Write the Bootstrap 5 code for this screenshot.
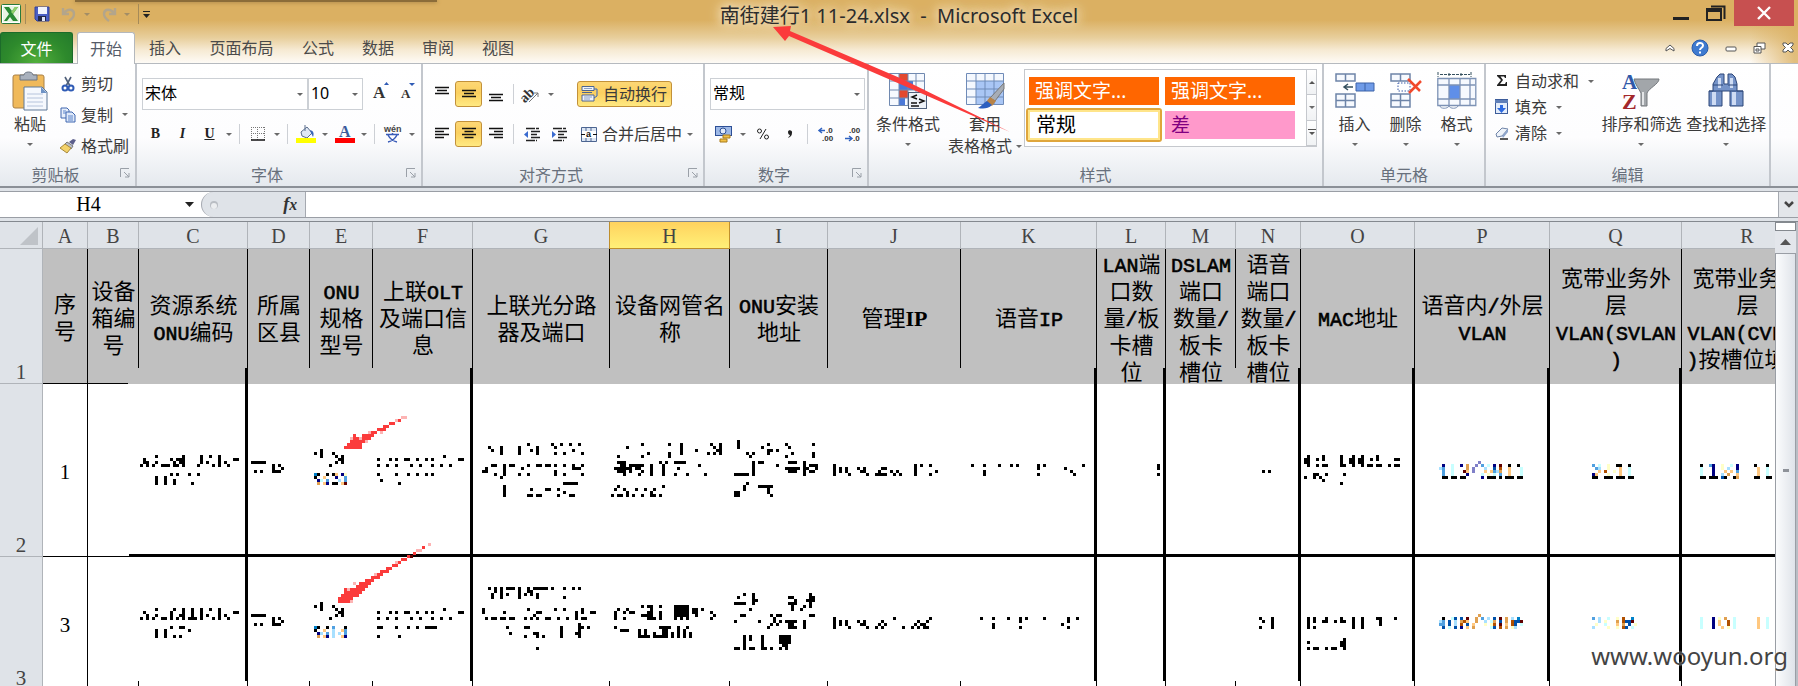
<!DOCTYPE html>
<html lang="zh-CN">
<head>
<meta charset="utf-8">
<meta name="viewport" content="width=device-width, initial-scale=1">
<title>南街建行1 11-24.xlsx - Microsoft Excel</title>
<link rel="stylesheet" href="https://cdn.jsdelivr.net/npm/bootstrap@5.3.0/dist/css/bootstrap.min.css">
<style>
body{font:16px/20px "Noto Sans","Noto Sans CJK SC",sans-serif;color:#3b3b3b;background:#dfe3e8}
button{font:inherit;color:inherit;border:0;background:none;padding:0}
svg{display:block;flex:none;overflow:visible}
/* window frame */
.frame-top{background:linear-gradient(90deg,transparent calc(100% - 48px),#dbb062cc calc(100% - 4px)),linear-gradient(#dbb062 0,#dbb062 20px,#e8cf9d 38px,#f6ead3 50px,#fefbf6 63px);height:63px}
.frame-top::before{content:"";position:absolute;left:75px;top:0;width:362px;height:2px;background:#8b6c39;box-shadow:0 0 4px #8b6c39}
.title-row{height:32px}
.title-text{font-size:20px;line-height:32px;color:#2c2c2c;text-shadow:0 0 8px #f4e4c4,0 0 12px #f4e4c4,0 0 16px #f4e4c4}
.quick{padding-left:1px;gap:0}
.vbar{width:1px;height:20px;background:#a58a58}
.win-close{width:60px;height:26px;background:#c75050}
.tab-row{height:31px}
.tab-btn{width:60px;height:31px;line-height:33px;text-decoration:none;color:#4a4a4a;text-align:center}
.tab-wide{width:93px}
.tab-file{width:73px;margin-right:4px;border-radius:3px 3px 0 0;border:1px solid #1c6b2a;border-bottom:0;color:#fff;background:radial-gradient(ellipse at 50% 100%,#53b03c 0,#2e8a2c 60%,#237a2c)}
.tab-on{width:58px;background:#fff;border:1px solid #b4b8bd;border-bottom:0;border-radius:3px 3px 0 0;height:32px;margin-bottom:-1px;color:#555b68}
/* ribbon */
.ribbon{height:125px;border-top:1px solid #b6babf;border-bottom:2px solid #8b9097;background:linear-gradient(#fff 0,#fdfdfe 60%,#e5e9ee 100%)}
.rgroup{border-right:2px solid #c3c7cd;height:122px}
.rbody{height:100px}
.rlabel{height:22px;line-height:22px;color:#68707c;text-align:center;position:relative}
.launch{position:absolute;right:5px;top:4px}
.w1{width:137px}.w2{width:286px}.w3{width:282px}.w4{width:164px}.w5{width:455px}.w6{width:162px}.w7{width:285px}
.inset{padding-left:5px}
.caret{display:inline-block;border:3px solid transparent;border-top-color:#6a6a6a;border-bottom:0;width:6px;height:3px;flex:none}
.big{display:flex;flex-direction:column;align-items:center;line-height:22px;white-space:nowrap}
.big .caret{margin-top:8px}
.pic{height:45px;display:flex;align-items:center}
.bw51{width:51px}.bw68{width:68px}.bw78{width:78px}.bw84{width:84px}.bw86{width:86px}
.stack{width:102px}
.mini{display:flex;align-items:center;gap:5px;white-space:nowrap}
.t26{height:26px}.t31{height:31px}
.tool{display:flex;align-items:center;justify-content:center;height:26px;width:27px;flex:none}
.drop{display:flex;align-items:center;justify-content:center;width:12px;height:26px;flex:none}
.sep{width:1px;height:20px;background:#cdd0d5;margin:0 4px;flex:none}
.on{border:1px solid #c2913a;border-radius:3px;background:linear-gradient(#fdd775,#fbd060 45%,#ffe981)}
.row-a{height:32px;margin-top:14px}
.row-b{height:26px;margin-top:11px}
.box{appearance:none;height:32px;border:1px solid #ccd0d5;border-radius:0;background:#fff url("data:image/svg+xml,%3Csvg xmlns='http://www.w3.org/2000/svg' width='6' height='3'%3E%3Cpath d='M0 0h6L3 3z' fill='%23666'/%3E%3C/svg%3E") no-repeat right 4px center;padding:0 0 2px 2px;font:inherit;line-height:26px;color:#000}
.box-font{width:169px}.box-size{width:56px}.box-num{width:155px}
.wrapcol{width:130px}
.serif-b{font:bold 14px/26px "Liberation Serif",serif;color:#222}
.gallery{width:293px;height:78px;border:1px solid #c5c8cd;background:#fff;margin-top:5px}
.swatches{gap:6px;align-content:flex-start;padding:7px 0 0 4px}
.swatch{width:130px;height:28px;text-align:left;padding-left:6px;line-height:26px;font-size:19px;color:#fff;background:#f60}
.swatch-pink{background:#ff99cb;color:#800080}
.swatch-pick{width:136px;height:34px;border:2px solid #dfa63c;outline:2px solid #ffe58a;outline-offset:-4px;border-radius:3px;background:#fff;color:#000;padding-left:8px;font-size:20px;margin:-3px}
.gscroll{width:18px;border-left:1px solid #c5c8cd}
.gscroll button{flex:1;border-bottom:1px solid #c5c8cd;display:flex;align-items:center;justify-content:center;background:linear-gradient(#fff,#f0f2f4)}
/* formula bar */
.fbar{height:27px;margin-top:3px;border-top:1px solid #9a9ea5;border-bottom:1px solid #9a9ea5;background:#fff}
.namebox{width:201px;background:#fff}
.namebox input{width:177px;border:0;text-align:center;font:20px/25px "Liberation Serif",serif;color:#000;background:none;outline:0}
.pill{width:105px;background:#dfe3e8;border:1px solid #a5a9b0;border-width:0 1px;border-radius:13px 0 0 13px}
.fx{font:italic bold 18px/24px "Liberation Serif",serif;color:#333}
.finput{border:0;outline:0;background:#fff}
.fexpand{width:20px;background:#e3e6ea;border-left:1px solid #a5a9b0;display:flex;align-items:center;justify-content:center}
.gridwrap{margin-top:3px;border-top:1px solid #84898f;min-height:0}
/* sheet */
.sheet{table-layout:fixed;width:1813px;border-collapse:separate;border-spacing:0;background:#fff;color:#000}
.sheet th,.sheet td{padding:0}
.sheet .colhead th{height:27px;background:#dfe3e8;border-right:1px solid #b0b4b9;border-bottom:1px solid #b0b4b9;font:20px/24px "Liberation Serif",serif;color:#444;text-align:center;padding-top:2px}
.sheet .colhead .cur{background:linear-gradient(#ffd25e,#fff078);border-color:#bf8f2c;box-shadow:-1px 0 #bf8f2c}
.rowhead{background:#dfe3e8;border-right:1px solid #b0b4b9;border-bottom:1px solid #b0b4b9;font:21px/22px "Liberation Serif",serif;color:#444;text-align:center;vertical-align:bottom}
.r1 td{height:135px;background:#c0c0c0;--thin:linear-gradient(#000,#000) right top/1px 119px no-repeat;--fat:linear-gradient(#000,#000) right bottom/3px 16px no-repeat}
.r1 .cap{height:134px;display:flex;align-items:center;justify-content:center;overflow:hidden;text-align:center;font-size:22px;line-height:27px;font-weight:400;white-space:nowrap;padding-top:2px}
.cap i{font:20px/20px "Liberation Mono",monospace;-webkit-text-stroke:.6px #000}
.cap b{font-family:"Liberation Serif",serif}
.r1 .n{background:var(--thin),#c0c0c0}
.r1 .f{background:var(--thin),var(--fat),#c0c0c0}
.r1 .a{border-right:1px solid #000;border-bottom:1px solid #000}
.r1 .b{background:linear-gradient(#000,#000) right top/1px 119px no-repeat,linear-gradient(#000,#000) left bottom/40px 1px no-repeat,#c0c0c0}
.r2 td{height:173px;border-bottom:3px solid #000;vertical-align:top}
.r2 .f{border-right:3px solid #000}
.sheet .r2 .a,.sheet .r3 .a{border-right:1px solid #000;border-bottom:1px solid #000;text-align:center;vertical-align:middle;font:21px/24px "Liberation Serif",serif;padding-top:4px;background:none}
.r2 .b{border-bottom:0;background:linear-gradient(#000,#000) left bottom/100% 1px no-repeat,linear-gradient(#000,#000) right bottom/10px 3px no-repeat}
.r3 td{height:133px;vertical-align:top}
.r3 .n,.r3 .b{background:linear-gradient(#000,#000) right bottom/1px 9px no-repeat}
.r3 .f{background:linear-gradient(#000,#000) right bottom/1px 9px no-repeat,linear-gradient(#000,#000) right top/3px 124px no-repeat}
.mosaic{width:100%;height:130px;shape-rendering:crispEdges}
.corner{position:relative}
.corner::after{content:"";position:absolute;right:4px;bottom:3px;border:9px solid transparent;border-right-color:#bfc3c8;border-bottom-color:#bfc3c8}
.vscroll{width:23px;background:#e3e6eb;border-right:2px solid #b9bdc4}
.vsplit{height:9px;border:1px solid #84898f;background:#fff}
.varrow{height:22px}
.vthumb{border:1px solid #9a9ea5;border-bottom:0;background:linear-gradient(90deg,#fbfcfd,#dfe3e9)}
.grip{width:6px;height:3px;background:#8e9299}
.over{position:absolute;left:0;top:0;pointer-events:none}
.stamp{position:absolute;right:10px;bottom:14px;font-size:24px;line-height:32px;color:#444;text-shadow:0 0 2px #fff}
</style>
</head>
<body class="vh-100 overflow-hidden position-relative d-flex flex-column">

<header class="frame-top position-relative flex-shrink-0">
  <div class="title-row d-flex align-items-start position-relative">
    <div class="quick d-flex align-items-center pt-1">
      <svg width="20" height="20" viewBox="0 0 20 20"><rect x=".5" y=".5" width="19" height="19" rx="1" fill="#fff" stroke="#2a7a3b"/><rect x="2" y="2" width="16" height="16" fill="#e9f4e4"/><path d="M3 3h5l3 4 3-4h3l-5 7 5 7h-5l-3-4-3 4H3l5-7z" fill="#2b8a34"/><path d="M14 3h3l-5 7-2-2z" fill="#8fd06a"/></svg>
      <span class="vbar ms-1 me-2"></span>
      <button aria-label="保存"><svg width="16" height="16" viewBox="0 0 16 16"><path d="M1 1h14v14H3l-2-2z" fill="#4a5fc4" stroke="#33439a"/><rect x="4" y="1" width="9" height="7" fill="#f1f4fc"/><rect x="4" y="10" width="8" height="5" fill="#23294a"/><rect x="8" y="11" width="3" height="4" fill="#dfe4f5"/></svg></button>
      <button class="ms-2 ps-1" aria-label="撤消"><svg width="14" height="15" viewBox="0 0 14 15"><path d="M1 1v6h6M2 6c4-5 10-4 10 1 0 3-2 5-5 7" fill="none" stroke="#b3a58b" stroke-width="2.4"/></svg></button>
      <span class="caret ms-2 opacity-50"></span>
      <button class="ms-2 ps-1" aria-label="恢复"><svg width="14" height="15" viewBox="0 0 14 15"><path d="M13 1v6H7M12 6C8 1 2 2 2 7c0 3 2 5 5 7" fill="none" stroke="#b3a58b" stroke-width="2.4"/></svg></button>
      <span class="caret ms-2 opacity-50"></span>
      <span class="vbar ms-2 me-1"></span>
      <button aria-label="自定义快速访问工具栏"><svg width="7" height="8" viewBox="0 0 7 8"><path d="M0 1h7v1H0zM0 4h7L3.500 8z" fill="#222"/></svg></button>
    </div>
    <div class="title-text position-absolute start-50 translate-middle-x text-nowrap">南街建行1 11-24.xlsx&nbsp; -&nbsp; Microsoft Excel</div>
    <div class="ms-auto d-flex">
      <button aria-label="最小化" class="me-3"><svg width="18" height="26" viewBox="0 0 18 26"><path d="M1 17h16v3H1z" fill="#222"/></svg></button>
      <button aria-label="向下还原" class="me-2"><svg width="20" height="26" viewBox="0 0 20 26"><path d="M5 6.500h13.500V19" fill="none" stroke="#222" stroke-width="2"/><path d="M1 9h14v11H1z" fill="none" stroke="#222" stroke-width="2"/><path d="M1 8h14v4H1z" fill="#222"/></svg></button>
      <button aria-label="关闭" class="win-close d-flex align-items-center justify-content-center"><svg width="16" height="14" viewBox="0 0 16 14"><path d="M2 1l12 12M14 1L2 13" stroke="#fff" stroke-width="2.400"/></svg></button>
      <span class="pe-1"></span>
    </div>
  </div>
  <nav class="tab-row d-flex align-items-start">
    <a href="#" class="tab-btn tab-file">文件</a>
    <a href="#" class="tab-btn tab-on">开始</a>
    <a href="#" class="tab-btn">插入</a>
    <a href="#" class="tab-btn tab-wide">页面布局</a>
    <a href="#" class="tab-btn">公式</a>
    <a href="#" class="tab-btn">数据</a>
    <a href="#" class="tab-btn">审阅</a>
    <a href="#" class="tab-btn">视图</a>
    <div class="ms-auto d-flex align-items-center h-100 gap-3 pe-1">
      <button aria-label="功能区最小化"><svg width="10" height="10" viewBox="0 0 10 10"><path d="M1 5.500L5 2l4 3.500V8L5 5.500 1 8z" fill="#fff" stroke="#555"/></svg></button>
      <button aria-label="帮助"><svg width="18" height="18" viewBox="0 0 18 18"><circle cx="9" cy="9" r="8" fill="#3f7bd0" stroke="#2a5ba8"/><path d="M6 7c0-4 6-4 6-.5C12 9 9 8.500 9 11M9 12.500v2" fill="none" stroke="#fff" stroke-width="2"/></svg></button>
      <button aria-label="最小化窗口"><svg width="12" height="12" viewBox="0 0 12 12"><rect x="1" y="5" width="10" height="4" rx="1" fill="#fff" stroke="#555"/></svg></button>
      <button aria-label="还原窗口"><svg width="13" height="12" viewBox="0 0 13 12"><path d="M4 1h8v6H4z" fill="#fff" stroke="#555"/><path d="M1 4.500h7V11H1z" fill="#fff" stroke="#555"/><path d="M3 7h3v2H3z" fill="none" stroke="#555"/></svg></button>
      <button aria-label="关闭窗口"><svg width="12" height="12" viewBox="0 0 12 12"><path d="M1 1h3l2 2 2-2h3v2L8.500 5.500 11 8v2H8L6 8l-2 2H1V8l2.500-2.500L1 3z" fill="#fff" stroke="#555"/></svg></button>
    </div>
  </nav>
</header>

<section class="ribbon d-flex flex-shrink-0">
  <div class="rgroup w1">
    <div class="rbody d-flex pt-1">
      <button class="big ms-2 ps-1"><span class="pic"><svg width="36" height="40" viewBox="0 0 36 40"><rect x="1" y="4" width="31" height="33" rx="2" fill="#f0b95a" stroke="#a98046"/><path d="M8 4h4c0-4 9-4 9 0h4v5H8z" fill="#a9b1bd" stroke="#6b7482"/><path d="M12 16h18l5 5v18H12z" fill="#f5f8fd" stroke="#5f7897"/><path d="M29 16v6h6z" fill="#6f93c6"/><path d="M15 23h16M15 27h16M15 31h16M15 35h16" stroke="#b6c4dc"/></svg></span>粘贴<span class="caret"></span></button>
      <div class="ms-2 ps-1">
        <button class="mini t31"><svg width="16" height="16" viewBox="0 0 16 16"><path d="M5 1l5 9M11 1L6 10" stroke="#50607a" stroke-width="1.600"/><circle cx="5" cy="12" r="2.500" fill="none" stroke="#2f5bb5" stroke-width="2"/><circle cx="11" cy="12" r="2.500" fill="none" stroke="#2f5bb5" stroke-width="2"/></svg>剪切</button>
        <button class="mini t31"><svg width="16" height="16" viewBox="0 0 16 16"><path d="M1 1h6l2 2v8H1z" fill="#e8effa" stroke="#3f66b0"/><path d="M6 5h6l3 3v7H6z" fill="#dfe9f9" stroke="#3f66b0"/><path d="M8 9h5M8 11h5M8 13h5M3 4h3M3 6h3" stroke="#5f86cb"/></svg>复制<span class="caret ms-1"></span></button>
        <button class="mini t31"><svg width="16" height="16" viewBox="0 0 16 16"><path d="M9 4l4-3 3 1-3 5z" fill="#5c5f8c"/><path d="M7 4l6 4-2 3-7-4z" fill="#b9bfcb" stroke="#777"/><path d="M5 6l6 4-4 5-7-5z" fill="#f3d26a" stroke="#a8893a"/></svg>格式刷</button>
      </div>
    </div>
    <div class="rlabel pe-4">剪贴板<svg class="launch" width="10" height="10" viewBox="0 0 10 10"><path d="M.5 9V.5H9M4 4l5 5M9 5v4H5" fill="none" stroke="#9aa0a8"/></svg></div>
  </div>

  <div class="rgroup w2">
    <div class="rbody d-flex flex-column inset">
      <div class="row-a d-flex">
        <select class="box box-font" aria-label="字体"><option>宋体</option></select>
        <select class="box box-size" aria-label="字号"><option>10</option></select>
        <button class="tool ms-1" aria-label="增大字号"><svg width="16" height="18" viewBox="0 0 16 18"><text x="0" y="16" font-family="Liberation Serif" font-weight="bold" font-size="17" fill="#333">A</text><path d="M11 3l2.500-3L16 3z" fill="#2f5bb5"/></svg></button>
        <button class="tool" aria-label="减小字号"><svg width="14" height="18" viewBox="0 0 14 18"><text x="0" y="16" font-family="Liberation Serif" font-weight="bold" font-size="13" fill="#333">A</text><path d="M8 1h6l-3 3z" fill="#2f5bb5"/></svg></button>
      </div>
      <div class="row-b d-flex align-items-center">
        <button class="tool serif-b">B</button><button class="tool serif-b fst-italic">I</button><button class="tool serif-b text-decoration-underline">U</button><span class="drop"><span class="caret"></span></span><span class="sep"></span>
        <button class="tool" aria-label="边框"><svg width="14" height="14" viewBox="0 0 14 14"><path d="M.5 0v13M6.500 0v13M13.500 0v13M0 .5h14M0 6.500h14" stroke="#777" stroke-dasharray="1 1"/><path d="M0 13h14" stroke="#111" stroke-width="1.500"/></svg></button><span class="drop"><span class="caret"></span></span><span class="sep"></span>
        <button class="tool" aria-label="填充颜色"><svg width="20" height="20" viewBox="0 0 20 20"><path d="M5 8l6-5 5 6-5 5-5-2z" fill="#dfe8f5" stroke="#5a6d8c"/><path d="M9 1v6" stroke="#5a6d8c"/><path d="M14 6c4 1 4 4 3 7l-2-4z" fill="#3a66b8"/><rect x="0" y="14" width="20" height="5" fill="#ff0"/></svg></button><span class="drop"><span class="caret"></span></span>
        <button class="tool" aria-label="字体颜色"><svg width="20" height="20" viewBox="0 0 20 20"><text x="4" y="13" font-family="Liberation Serif" font-weight="bold" font-size="16" fill="#3b5c9c">A</text><rect y="14" width="20" height="5" fill="red"/></svg></button><span class="drop"><span class="caret"></span></span><span class="sep"></span>
        <button class="tool" aria-label="拼音"><svg width="18" height="18" viewBox="0 0 18 18"><text x="0" y="7" font-family="Liberation Sans" font-weight="bold" font-size="9" fill="#444">wén</text><path d="M2 9.500h13M8.500 8v2M4 10c2 4 5 6 9 7M13 10c-2 4-5 6-9 7" fill="none" stroke="#3a5cb8" stroke-width="1.500"/></svg></button><span class="drop"><span class="caret"></span></span>
      </div>
    </div>
    <div class="rlabel pe-4">字体<svg class="launch" width="10" height="10" viewBox="0 0 10 10"><path d="M.5 9V.5H9M4 4l5 5M9 5v4H5" fill="none" stroke="#9aa0a8"/></svg></div>
  </div>

  <div class="rgroup w3">
    <div class="rbody d-flex inset">
      <div>
        <div class="row-a d-flex align-items-center">
          <button class="tool" aria-label="顶端对齐"><svg width="14" height="18" viewBox="0 0 14 18"><path d="M0 2.500h14M2 5.500h10M0 8.500h14" stroke="#111" stroke-width="1.500"/></svg></button><button class="tool on" aria-label="垂直居中"><svg width="14" height="10" viewBox="0 0 14 10"><path d="M0 1.500h14M2 4.500h10M0 7.500h14" stroke="#111" stroke-width="1.500"/></svg></button><button class="tool" aria-label="底端对齐"><svg width="14" height="18" viewBox="0 0 14 18"><path d="M0 9.500h14M2 12.500h10M0 15.500h14" stroke="#111" stroke-width="1.500"/></svg></button><span class="sep"></span>
          <button class="tool" aria-label="方向"><svg width="17" height="17" viewBox="0 0 17 17"><text x="-3" y="12" font-family="Liberation Serif" font-weight="bold" font-size="14" fill="#333" transform="rotate(-45 6 9)">ab</text><path d="M6 16l9-9M11 7h4v4" fill="none" stroke="#777"/></svg></button><span class="drop"><span class="caret"></span></span>
        </div>
        <div class="row-b d-flex align-items-center">
          <button class="tool" aria-label="左对齐"><svg width="14" height="14" viewBox="0 0 14 14"><path d="M0 1.500h14M0 4.500h9M0 7.500h14M0 10.500h9" stroke="#111" stroke-width="1.500"/></svg></button><button class="tool on" aria-label="居中"><svg width="14" height="14" viewBox="0 0 14 14"><path d="M0 1.500h14M2.500 4.500h9M0 7.500h14M2.500 10.500h9" stroke="#111" stroke-width="1.500"/></svg></button><button class="tool" aria-label="右对齐"><svg width="14" height="14" viewBox="0 0 14 14"><path d="M0 1.500h14M5 4.500h9M0 7.500h14M5 10.500h9" stroke="#111" stroke-width="1.500"/></svg></button><span class="sep"></span>
          <button class="tool" aria-label="减少缩进"><svg width="16" height="15" viewBox="0 0 16 15"><path d="M2 1.500h13M7 4.500h9M7 7.500h6M7 10.500h9M2 13.500h11" stroke="#222" stroke-width="1.500" stroke-dasharray="9 1"/><path d="M4 4L0 7.500 4 11z" fill="#3a6bd0"/></svg></button><button class="tool" aria-label="增加缩进"><svg width="16" height="15" viewBox="0 0 16 15"><path d="M2 1.500h13M7 4.500h9M7 7.500h6M7 10.500h9M2 13.500h11" stroke="#222" stroke-width="1.500" stroke-dasharray="9 1"/><path d="M1 4l4 3.500L1 11z" fill="#3a6bd0"/></svg></button>
        </div>
      </div>
      <div class="ms-auto wrapcol">
        <div class="row-a d-flex align-items-center ps-1"><button class="mini on t26 px-1"><svg width="16" height="16" viewBox="0 0 16 16"><path d="M0 .5h12v4H0zM0 6.500h10M0 9h12v6H0z" fill="#eef3fb" stroke="#4c6591"/><path d="M2 2.500h8M2 11h8M2 13h6" stroke="#8aa0c4"/><path d="M12 3h3v7l-3 2" fill="none" stroke="#3465c0"/></svg>自动换行</button></div>
        <div class="row-b d-flex align-items-center ps-2"><button class="mini"><svg width="16" height="15" viewBox="0 0 16 15"><path d="M.5.5h15v14H.5zM5 0v4M10 0v4M5 11v4M10 11v4" fill="#dce6f4" stroke="#4c6591"/><rect x="1" y="4" width="14" height="7" fill="#fff"/><text x="5" y="10" font-family="Liberation Sans" font-weight="bold" font-size="9" fill="#111">a</text><path d="M0 7.500h4M16 7.500h-4" stroke="#111"/></svg>合并后居中<span class="caret"></span></button></div>
      </div>
    </div>
    <div class="rlabel pe-4">对齐方式<svg class="launch" width="10" height="10" viewBox="0 0 10 10"><path d="M.5 9V.5H9M4 4l5 5M9 5v4H5" fill="none" stroke="#9aa0a8"/></svg></div>
  </div>

  <div class="rgroup w4">
    <div class="rbody d-flex flex-column inset">
      <div class="row-a d-flex"><select class="box box-num" aria-label="数字格式"><option>常规</option></select></div>
      <div class="row-b d-flex align-items-center">
        <button class="tool" aria-label="会计数字格式"><svg width="18" height="17" viewBox="0 0 18 17"><rect x=".5" y=".5" width="16" height="9" fill="#9db8e6" stroke="#2d4f96"/><circle cx="8" cy="5" r="3" fill="#dfe9f9" stroke="#2d4f96"/><path d="M8 9h7v3H8zM5 13h7v3H5z" fill="#f2c146" stroke="#a87a1b"/></svg></button><span class="drop"><span class="caret"></span></span>
        <button class="tool" aria-label="百分比"><svg width="12" height="12" viewBox="0 0 12 12"><circle cx="2.500" cy="3" r="2" fill="none" stroke="#222"/><circle cx="9.500" cy="9" r="2" fill="none" stroke="#222"/><path d="M9 1L3 11" stroke="#222"/></svg></button>
        <button class="tool" aria-label="千位分隔"><svg width="6" height="9" viewBox="0 0 6 9"><path d="M1 2c0-3 5-2 4 1 0 3-2 4-4 5 1-2 2-2 2-3C2 5 1 4 1 2z" fill="#222"/></svg></button><span class="sep"></span>
        <button class="tool" aria-label="增加小数位数"><svg width="16" height="15" viewBox="0 0 16 15"><text x="8" y="6" font-family="Liberation Sans" font-weight="bold" font-size="8" fill="#333">.0</text><text x="4" y="14" font-family="Liberation Sans" font-weight="bold" font-size="8" fill="#333">.00</text><path d="M7 3.500H1M4 1L1 3.500 4 6" fill="none" stroke="#2f62c0" stroke-width="1.500"/></svg></button><button class="tool" aria-label="减少小数位数"><svg width="16" height="15" viewBox="0 0 16 15"><text x="4" y="6" font-family="Liberation Sans" font-weight="bold" font-size="8" fill="#333">.00</text><text x="8" y="14" font-family="Liberation Sans" font-weight="bold" font-size="8" fill="#333">.0</text><path d="M0 11.500h6M4 9l3 2.500L4 14" fill="none" stroke="#2f62c0" stroke-width="1.500"/></svg></button>
      </div>
    </div>
    <div class="rlabel pe-4">数字<svg class="launch" width="10" height="10" viewBox="0 0 10 10"><path d="M.5 9V.5H9M4 4l5 5M9 5v4H5" fill="none" stroke="#9aa0a8"/></svg></div>
  </div>

  <div class="rgroup w5">
    <div class="rbody d-flex inset">
      <button class="big bw68 mt-1"><span class="pic"><svg width="38" height="36" viewBox="0 0 38 36"><path d="M.5.500h35v32H.5z" fill="#f6f9fe"/><path d="M10 0h9v8h-9zM10 17h9v8h-9z" fill="#e2492f"/><path d="M10 8h14v9H10zM10 25h6v7h-6z" fill="#4a78d8"/><path d="M.5.500h35v32H.5zM10 0v32M19 0v32M27 0v32M0 8h36M0 17h36M0 25h36" fill="none" stroke="#7089b0"/><rect x="19.500" y="19.500" width="18" height="16" fill="#eef2f8" stroke="#50617c"/><path d="M28 22l-5 2 5 2M30 26l5 2-5 2M22 30h6M22 33h8" fill="none" stroke="#111" stroke-width="1.400"/></svg></span>条件格式<span class="caret"></span></button>
      <button class="big bw78 mt-1 ms-1"><span class="pic"><svg width="39" height="36" viewBox="0 0 39 36"><path d="M.5.500h37v31H.5z" fill="#f4f8fe"/><path d="M10 8h27v23H10z" fill="#a9c6f5"/><path d="M.5.500h37v31H.5zM10 0v31M19 0v31M28 0v31M0 8h37M0 16h37M0 24h37" fill="none" stroke="#6f8bb8"/><path d="M38 10v6L29 28l-5-3z" fill="#a7adb6" stroke="#777"/><path d="M24 24l6 4-4 5-6-4z" fill="#b88347"/><path d="M21 28l5 4c-4 4-9 4-14 3 4-2 5-5 9-7z" fill="#2c5fc0"/></svg></span>套用<span class="d-flex align-items-center">表格格式<span class="caret mt-0 ms-1"></span></span></button>
      <div class="gallery d-flex">
        <div class="flex-fill d-flex flex-wrap swatches">
          <button class="swatch">强调文字...</button><button class="swatch">强调文字...</button>
          <button class="swatch swatch-pick">常规</button><button class="swatch swatch-pink">差</button>
        </div>
        <div class="gscroll d-flex flex-column">
          <button aria-label="上一行"><svg width="6" height="3" viewBox="0 0 6 3"><path d="M0 3h6L3 0z" fill="#555"/></svg></button><button aria-label="下一行"><span class="caret"></span></button><button aria-label="其他"><svg width="8" height="7" viewBox="0 0 8 7"><path d="M0 0h8v1H0zM1 3h6L4 6z" fill="#555"/></svg></button>
        </div>
      </div>
    </div>
    <div class="rlabel">样式</div>
  </div>

  <div class="rgroup w6">
    <div class="rbody d-flex pt-1 inset">
      <button class="big bw51"><span class="pic"><svg width="40" height="35" viewBox="0 0 40 35"><path d="M1 1h19v7H1zM10.500 1v7M1 21h19v13H1zM10.500 21v13M1 27.500h19" fill="#f6f9fe" stroke="#6d84a8" stroke-width="1.500"/><path d="M21 10h18v8H21zM30 10v8" fill="#6f9be8" stroke="#3c62a8"/><path d="M9 14h9M13 11l-4 3 4 3" fill="none" stroke="#35505f" stroke-width="1.500"/></svg></span>插入<span class="caret"></span></button>
      <button class="big bw51"><span class="pic"><svg width="32" height="35" viewBox="0 0 32 35"><path d="M1 1h19v7H1zM10.500 1v7M1 21h19v13H1zM10.500 21v13M1 27.500h19" fill="#f6f9fe" stroke="#6d84a8" stroke-width="1.500"/><path d="M8 10h12v8H8z" fill="none" stroke="#3c5ca8" stroke-dasharray="1.500 1.500"/><path d="M18 6l12 12M31 8L19 20" stroke="#f1492c" stroke-width="2.500"/></svg></span>删除<span class="caret"></span></button>
      <button class="big bw51"><span class="pic"><svg width="40" height="38" viewBox="0 0 40 38"><path d="M1 0v5M34 0v5M3 2.500h30M12 1v3M24 1v3" stroke="#35505f" stroke-dasharray="3 1"/><path d="M.8 6.500h38v27H.8z" fill="#f6f9fe"/><path d="M12 13h11v14H12z" fill="#5f8fe8"/><path d="M.8 6.500h38v27H.8zM12 6v27M23 6v27M33 6v27M0 13h38M0 27h38" fill="none" stroke="#7d92b5" stroke-width="1.300"/><path d="M3 34c0 3 8 3 9 0M12 34c1 3 8 3 9 0" fill="none" stroke="#7d92b5"/></svg></span>格式<span class="caret"></span></button>
    </div>
    <div class="rlabel">单元格</div>
  </div>

  <div class="rgroup w7">
    <div class="rbody d-flex">
      <div class="ms-2 d-flex flex-column stack pt-1">
        <button class="mini t26"><svg width="16" height="14" viewBox="0 0 16 14"><path d="M3 1h9v3h-1l-1-1.500H6.500L9 6l-3 4h5l1-2h1v4H3v-1l4-5-4-4z" fill="#222"/></svg>自动求和<span class="caret ms-1"></span></button>
        <button class="mini t26"><svg width="16" height="16" viewBox="0 0 16 16"><rect x="1.500" y=".500" width="12" height="14" fill="#e4edfa" stroke="#3c5c9a"/><path d="M1 1h13v3H1z" fill="#5f7fb8"/><path d="M6 6h3v3h3l-4.500 5L3 9h3z" fill="#2d6ae0"/></svg>填充<span class="caret ms-1"></span></button>
        <button class="mini t26"><svg width="16" height="14" viewBox="0 0 16 14"><path d="M2 8l6-6 6 1-6 7-5 1z" fill="#eef3fa" stroke="#6f84a8"/><path d="M8 10l6-7v3l-5 6z" fill="#8ea5cc"/><path d="M6 13h8" stroke="#222" stroke-width="1.500"/></svg>清除<span class="caret ms-1"></span></button>
      </div>
      <button class="big bw84 ms-1 mt-1"><span class="pic"><svg width="38" height="38" viewBox="0 0 38 38"><text x="0" y="17" font-family="Liberation Serif" font-weight="bold" font-size="21" fill="#2f58a8">A</text><text x="0" y="37" font-family="Liberation Serif" font-weight="bold" font-size="22" fill="#a3282c">Z</text><path d="M12 7h25c0 5-10 9-12 14v13h-6V21C17 17 13 12 12 7z" fill="#a2a6aa" stroke="#74787d"/><path d="M20 20h2v13h-2z" fill="#e3e5e7"/></svg></span>排序和筛选<span class="caret"></span></button>
      <button class="big bw86 mt-1"><span class="pic"><svg width="36" height="34" viewBox="0 0 36 34"><path d="M9 3l3-3h4v10h4V0h4l3 3 2 7v7h6v15H22V17h-8v15H1V17h4v-7z" fill="#7593c8" stroke="#2d4678"/><path d="M4 18h4v13H4zM24 18h4v13h-4zM10 4h3v10h-3zM22 4h3v10h-3z" fill="#cfdcf3"/><path d="M1 17h13M22 17h13M5 11h10M20 11h9" stroke="#2d4678"/></svg></span>查找和选择<span class="caret"></span></button>
    </div>
    <div class="rlabel">编辑</div>
  </div>
</section>

<section class="fbar d-flex flex-shrink-0">
  <div class="namebox d-flex align-items-center"><input value="H4" aria-label="名称框"><svg class="ms-2" width="9" height="5" viewBox="0 0 9 5"><path d="M0 0h9L4.500 5z" fill="#222"/></svg></div>
  <div class="pill d-flex align-items-center justify-content-between ps-2 pe-2"><svg width="8" height="8" viewBox="0 0 8 8"><circle cx="4" cy="4" r="4" fill="#b9bdc3"/><circle cx="4" cy="5" r="3" fill="#eceef0"/></svg><button class="fx" aria-label="插入函数">f<small>x</small></button></div>
  <input class="finput flex-fill" aria-label="编辑栏">
  <button class="fexpand" aria-label="展开编辑栏"><svg width="10" height="7" viewBox="0 0 10 7"><path d="M1 1l4 4 4-4" fill="none" stroke="#444" stroke-width="2.500"/></svg></button>
</section>

<main class="gridwrap d-flex flex-fill">
  <div class="flex-fill overflow-hidden">
    <table class="sheet">
      <colgroup id="cols"></colgroup>
      <thead><tr class="colhead"><th class="corner"></th><th>A</th><th>B</th><th>C</th><th>D</th><th>E</th><th>F</th><th>G</th><th class="cur">H</th><th>I</th><th>J</th><th>K</th><th>L</th><th>M</th><th>N</th><th>O</th><th>P</th><th>Q</th><th>R</th></tr></thead>
      <tbody>
        <tr class="r1"><th class="rowhead">1</th>
          <td class="a"><div class="cap">序<br>号</div></td>
          <td class="b"><div class="cap">设备<br>箱编<br>号</div></td>
          <td class="f"><div class="cap"><span>资源系统<br><i>ONU</i>编码</span></div></td>
          <td class="n"><div class="cap">所属<br>区县</div></td>
          <td class="n"><div class="cap"><span><i>ONU</i><br>规格<br>型号</span></div></td>
          <td class="f"><div class="cap"><span>上联<i>OLT</i><br>及端口信<br>息</span></div></td>
          <td class="n"><div class="cap">上联光分路<br>器及端口</div></td>
          <td class="n"><div class="cap">设备网管名<br>称</div></td>
          <td class="n"><div class="cap"><span><i>ONU</i>安装<br>地址</span></div></td>
          <td class="n"><div class="cap"><span>管理<b>IP</b></span></div></td>
          <td class="f"><div class="cap"><span>语音<i>IP</i></span></div></td>
          <td class="f"><div class="cap"><span><i>LAN</i>端<br>口数<br>量<i>/</i>板<br>卡槽<br>位</span></div></td>
          <td class="n"><div class="cap"><span><i>DSLAM</i><br>端口<br>数量<i>/</i><br>板卡<br>槽位</span></div></td>
          <td class="f"><div class="cap"><span>语音<br>端口<br>数量<i>/</i><br>板卡<br>槽位</span></div></td>
          <td class="f"><div class="cap"><span><i>MAC</i>地址</span></div></td>
          <td class="f"><div class="cap"><span>语音内<i>/</i>外层<br><i>VLAN</i></span></div></td>
          <td class="f"><div class="cap"><span>宽带业务外<br>层<br><i>VLAN(SVLAN</i><br><i>)</i></span></div></td>
          <td><div class="cap"><span>宽带业务内<br>层<br><i>VLAN(CVLAN</i><br><i>)</i>按槽位填写</span></div></td></tr>
        <tr class="r2"><th class="rowhead">2</th><td class="a">1</td><td class="b"></td><td class="f" id="C2"></td><td id="D2"></td><td id="E2"></td><td class="f" id="F2"></td><td id="G2"></td><td id="H2"></td><td id="I2"></td><td id="J2"></td><td class="f" id="K2"></td><td class="f" id="L2"></td><td></td><td class="f" id="N2"></td><td class="f" id="O2"></td><td class="f" id="P2"></td><td class="f" id="Q2"></td><td id="R2"></td></tr>
        <tr class="r3"><th class="rowhead">3</th><td class="a">3</td><td class="b"></td><td class="f" id="C3"></td><td class="n" id="D3"></td><td class="n" id="E3"></td><td class="f" id="F3"></td><td class="n" id="G3"></td><td class="n" id="H3"></td><td class="n" id="I3"></td><td class="n" id="J3"></td><td class="f" id="K3"></td><td class="f"></td><td class="n"></td><td class="f" id="N3"></td><td class="f" id="O3"></td><td class="f" id="P3"></td><td class="f" id="Q3"></td><td class="n" id="R3"></td></tr>
      </tbody>
    </table>
  </div>
  <div class="vscroll d-flex flex-column flex-shrink-0">
    <div class="vsplit"></div>
    <button class="varrow d-flex align-items-center justify-content-center" aria-label="向上滚动"><svg width="11" height="6" viewBox="0 0 11 6"><path d="M0 6h11L5.500 0z" fill="#555"/></svg></button>
    <div class="vthumb flex-fill d-flex align-items-center justify-content-center"><span class="grip"></span></div>
  </div>
</main>

<svg class="over" width="1100" height="686" viewBox="0 0 1100 686" id="arrows"><path d="M773 27l18-1-1 5 110 47 110 54-110-48-111-48-4 5z" fill="#fb3b3b"/></svg>
<div class="stamp">www.wooyun.org</div>

<script src="https://cdn.jsdelivr.net/npm/bootstrap@5.3.0/dist/js/bootstrap.bundle.min.js"></script>
<script>
// column widths, row header first
const widths=[43,45,51,109,62,63,100,137,120,98,133,136,69,70,65,114,135,132,131];
document.getElementById('cols').innerHTML=widths.map(w=>`<col style="width:${w}px">`).join('');

// colour letters that may follow a column number; no letter is black
const ink={n:'#000080',b:'#0080c8',l:'#a8e0ff',t:'#ffc880',o:'#e0a050',y:'#ffffc8',r:'#600000',s:'#50a0e0',c:'#c8ffff',p:'#8080c8',m:'#b05000',d:'#0050a8',R:'#fb3b3b',L:'#fdb4b4'};
// masked cell contents: [left, top, rows of 3px blocks]; rows split by "/", each a list of columns or column ranges
const E='2/0 2 6/2 7 9/8-9/7 9/5//';
const masks={
C2:[1,71,'5 14 20 23 26/1 10 12-14 20 26 31-32/1-2 5 11 13-14 20 22 26 28/0 2 4 7-9 11-12 14 19 24 26 29///10 12 16 19/5 8/5 8 11/5 8 11 17'],
C3:[1,51,'5 11 14 17 20 23 26/1 10 14 17 20 26 31-32/2 5 10 13-14 17 20 22 26 28/0 2 4 7-8 10 12 14 16-18 20 24 26 29///10 13-14/5 8 16/5 8/5 8 11 13'],
D2:[3,77,'0-4/7 9/7 10/1 3 7-9'],D3:[3,57,'0-4/7 9/7 10/1 3 7-9'],
E2:[4,65,E+'/0b 1 4 6 7t 9n 10y/0 3t 7n 10s/1n 2c 4s 8l 10s/1o 3t 4n 6 7 9t 10r'],
E3:[4,45,E+'/0b 1 4 6s 10/0 3t 6l 9t 10s/1n 2l 4s 6l 8l 10s/1o 3t 4n 6l 9t 10n'],
F2:[4,71,'22/0 4 6 9-10 13 16 18 27-28//0 3 6 11 14 18 21 24///0 6 10 13 16 18//1/7'],
F3:[4,51,'22/0 4 6 9-10 13 16 18 27-28//0 3 6 11 14 18 21 24///0-1 6 10 13 16-19///0 7'],
G2:[9,59,'15 23 26 29 32/2 6 12 18 24/3 6 12 16 18 30/6 12 18 24 27 33////3-4 7 9-10 15 18-19 21-22 24 27 30 33/1 7 13 30-32/0-1 7 24/4 7 12 15 24 27 33/6//27-31/7/7 16 21-22 25/7 27/7 15-16 18-19 25 29-30'],
G3:[9,30,'2 4 6 8-10 12 15 17-21 23 27 30 32/4 6 12 15-16/3 6 8 12 14 16 18/3 6 12 18 27////0 15 24 27 33/0 7 18-19 31 33 36-37/17 31/1 3-4 6-7 9-10 14 16 18 21-22 25 28 31 33-34//32/8 14-15 26 32-33 35/26 32/9 17-18 26 31-32/14 18 20 26 32////18'],
H2:[1,59,'10 19 23 33 36/5 23 34 36/23 28 35-36/12 19 23 32 34 36/2 10 19//2-4 16 18 21-24/3-4 6-10 13 17 29/1-6 8-9 13 17 22/2-4 6 10 13 17/4 9 13 17 21 25 31////2 17/1 4 8 11 14/5 13/0 2-3 5 7 10 13-14 16'],
H3:[1,48,'10 12-13 16 21-25/2 5 13 21-25 27-28 30/1 4 6-7 12-13 16 21-25 27-28 33/1 10-13 16 21-25 28 34/1 4 12-14 16 21 23 25 33///1 16-19 22 25/3-5 9 11 17-18 22 24/9 11 14 17-18 20 22 24 26/9-12 14-18 20 22 24 26'],
I2:[4,56,'1/1 11 17 26/1 9 18/11-12 14/4 6 11 19 26/5 17 26//6 8-9 18-20 23/6 14 23 25-27/6 17-21 23-24 27/6 18-20 23 25-26/0-4 6 23///4/3 8-12/3 11/0-1 11/0-1 12'],
I3:[4,36,'3 6 25/1 6 18-19 25-26/6-7 20 24-26/0-3 6 18-20 25/19 23 25/5 19 22//2-3 12 14-15 25-26/13/0 8 13 15 17-20 23/12 14 18-19 23/11 18-20 23///3 5 9 15-18/3 5 9 15-18/3 9 15-18/3 9 16-17/0-1 3 5-6 9-10 12 15 17'],
J2:[5,80,'0 27 29 32/0 2 4 8 10 16-17 27/0 2 4 9-10 15 19 21 27 34/0 5 11 14-17 20 22 27 32'],
J3:[5,60,'0 20 32/0 2 4 8 10 16 28 31/0 2 4 9-10 15 17 27 29-30/0 5 11 14 16 23 26 28 30-31'],
K2:[10,80,'0 4 9 13 15 22 24 37/22 31/4 33/4 22 34'],K3:[19,60,'0 4 9 13 15 21 29 32/13 29/4 27/4 13 29'],
L2:[60,80,'0/0//0'],N2:[26,86,'0 2'],N3:[23,60,'0 4/1 4/4/0 4'],
O2:[3,71,'1 6 12 16 19 24/0-1 4 6 12 15-16 18-19 22 24 30-31/0-1 12 15-16 18-19/1 4 6-7 12-13 16 19 21-22 24-25 28 30-31///3-4 7 13/0 3 5/6/12'],
O3:[6,60,'0 2 6 11 15 18 23-24 29/0 2 5-6 9 11-12 15 18 24/0 15 18 24/0 2 15 18////12/0 11-12/11-12/0 2-3 6 8-9 12'],
P2:[24,77,'13p/1n 4c 7n 9o 12p 14s 16c 18n 20r 23 26/0l 1s 4c 9o 11p 15l 18d 20m 23t 27c/1s 4c 8r 9t 11p 15t 17t 18s 19l 20o 23t 27c/1s 4c 9n 14c 16y 18c 20s 23t 27c/1-2 4-5 7-8 14n 16-18 20 22-24 26-27'],
P3:[24,57,'13o/1 4c 5d 7d 9r 12o 14s 16l 18d 20r 22o 24l 26b/0l 1s 3d 5l 7o 8m 9t 12o 15l 17c 18o 20d 22o 24m 25-26d 27r/0s 1s 3d 5l 7m 9d 11t 15y 17y 18m 20r 22t 24m 25d 27c/1d 3c 5d 7n 9t 11o 17c 18d 20m 22o 24y 25l'],
Q2:[42,80,'0s 2c 5y 8 9 12/1s 2l 5y 9t 12c/2t 4m 7y 9t 12c/0n 1t 5y 9t 12c/0-1 4-6 8-10 12-13'],
Q3:[42,60,'0s 2l 5c 8y 10m 13b/2l 4y 8o 10m 11d 12d 13r/1y 4c 8t 10o 12d 14y/0l 5y 8y 10m 11d 13c'],
R2:[18,80,'0 3s 4n 7y 10c 12n 18 22/0c 4n 7y 9l 12n 19t 22c/0c 4n 8t 10t 12s 19t 22c/0c 4n 7l 9o 12t 19t 22c/0-1 3-5 7d 8 11 12o 18-19 22-23'],
R3:[18,60,'0c 4n 6y 8o 11c 19t 22c/0c 4n 6t 9m 11c 19t 22c/0c 4n 6t 9m 11c 19t 22c/0c 4n 7t 9y 11c 19t 22c']};

function blocks(x,y,rows,base){
  return rows.split('/').map((row,r)=>row.trim().split(' ').filter(Boolean).map(tok=>{
    const m=tok.match(/^(\d+)(?:-(\d+))?([a-zA-Z]?)$/),a=+m[1],b=+(m[2]||m[1]);
    return `<rect x="${x+a*3}" y="${y+r*3}" width="${(b-a+1)*3}" height="3" fill="${m[3]?ink[m[3]]:base}"/>`;
  }).join('')).join('');
}
for(const id in masks){
  const [x,y,rows]=masks[id];
  document.getElementById(id).innerHTML=`<svg class="mosaic">${blocks(x,y,rows,'#000')}</svg>`;
}
document.getElementById('arrows').innerHTML+='<g shape-rendering="crispEdges">'+
  blocks(344,416,'19-20L/17L 18/15-16/13-14/11-13/8L 9-10 12L/3 6-9/2L 3-4 5L 6-8/2-6 7L/1-5/0-5','#fb3b3b')+
  blocks(338,543,'30L/28/26-27L/25/23 24r/21-22/19L 20/18-19/16-17/14-16/12L 13-14/11-13/9-11/5L 7-10/6-9/2 3L 4-8/2-7/1-6/0-4/0-3 4L','#fb3b3b')+'</g>';
</script>
</body>
</html>
